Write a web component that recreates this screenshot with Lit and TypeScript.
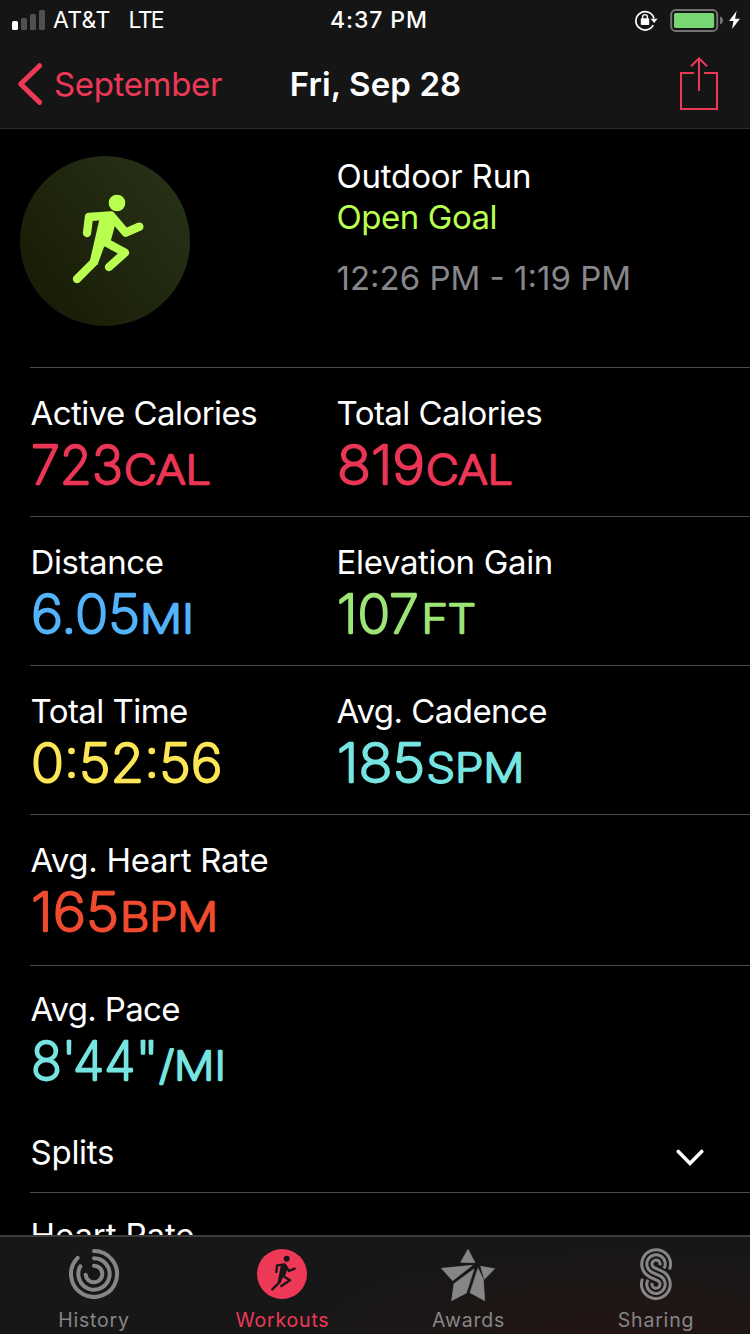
import { LitElement, html, svg, css } from "lit";
import { customElement, property } from "lit/decorators.js";
import { styleMap } from "lit/directives/style-map.js";

interface Run {
  text: string;
  x: number;
  width: number;
  adjust?: "spacing" | "spacingAndGlyphs";
}

interface Metric {
  label: string;
  tracking: number;
  color: string;
  value: Run[];
  unit?: Run;
}

const METRIC_ROWS: Metric[][] = [
  [
    { label: "Active Calories", tracking: -0.55, color: "#ea3555", value: [{ text: "723", x: 0, width: 92 }], unit: { text: "CAL", x: 93, width: 87 } },
    { label: "Total Calories", tracking: -0.55, color: "#ea3555", value: [{ text: "819", x: 0, width: 88 }], unit: { text: "CAL", x: 89, width: 87 } },
  ],
  [
    { label: "Distance", tracking: -0.4, color: "#52b3fa", value: [{ text: "6.05", x: 0, width: 109 }], unit: { text: "MI", x: 109, width: 54 } },
    { label: "Elevation Gain", tracking: -0.35, color: "#9de376", value: [{ text: "107", x: 0, width: 82 }], unit: { text: "FT", x: 84.5, width: 54.5 } },
  ],
  [
    { label: "Total Time", tracking: -0.55, color: "#fde656", value: [{ text: "0:52:56", x: 0, width: 191.5 }] },
    { label: "Avg. Cadence", tracking: -0.55, color: "#76e5e2", value: [{ text: "185", x: 0, width: 88 }], unit: { text: "SPM", x: 89.5, width: 98 } },
  ],
  [{ label: "Avg. Heart Rate", tracking: -0.3, color: "#f04b2f", value: [{ text: "165", x: 0, width: 88 }], unit: { text: "BPM", x: 89, width: 98 } }],
  [
    {
      label: "Avg. Pace",
      tracking: -0.65,
      color: "#76e5e2",
      value: [
        { text: "8'44", x: 0, width: 104.5 },
        { text: "''", x: 104.5, width: 23, adjust: "spacing" },
      ],
      unit: { text: "/MI", x: 128, width: 67 },
    },
  ],
];

@customElement("metric-cell")
export class MetricCell extends LitElement {
  @property({ attribute: false }) metric!: Metric;

  static styles = css`
    :host {
      display: block;
    }
    .label {
      height: 40px;
      line-height: 40px;
      font-size: 33px;
      color: #fff;
      white-space: nowrap;
    }
    .figure {
      display: block;
      width: 240px;
      height: 64px;
      overflow: visible;
    }
    .figure text {
      font-family: Inter, "Liberation Sans", sans-serif;
      font-weight: 200;
      stroke-width: 2.3;
      stroke-linejoin: round;
      stroke-linecap: round;
    }
    .number {
      font-size: 53px;
    }
    .unit {
      font-size: 40px;
    }
  `;

  private renderRun(run: Run, kind: string) {
    return svg`<text class=${kind} x=${run.x} y="51" textLength=${run.width} lengthAdjust=${run.adjust ?? "spacingAndGlyphs"}>${run.text}</text>`;
  }

  render() {
    const m = this.metric;
    return html`
      <div class="label" style=${styleMap({ letterSpacing: `${m.tracking}px` })}>${m.label}</div>
      <svg class="figure" viewBox="0 0 240 64" fill=${m.color} stroke=${m.color}>
        ${m.value.map((run) => this.renderRun(run, "number"))}
        ${m.unit ? this.renderRun(m.unit, "unit") : null}
      </svg>
    `;
  }
}

@customElement("status-bar")
export class StatusBar extends LitElement {
  static styles = css`
    :host {
      display: grid;
      grid-template-columns: 1fr auto 1fr;
      align-items: center;
      height: 40px;
      padding: 0 10px 0 12px;
      color: #fff;
      font-size: 23px;
    }
    .left,
    .right {
      display: flex;
      align-items: center;
    }
    .right {
      justify-content: flex-end;
    }
    .carrier {
      margin-left: 8px;
      letter-spacing: 0.3px;
    }
    .network {
      margin-left: 18px;
      letter-spacing: -1.7px;
    }
    .time {
      padding-left: 6px;
      font-weight: 500;
      letter-spacing: 0.9px;
    }
    svg {
      display: block;
    }
  `;

  render() {
    return html`
      <div class="left">
        <svg width="33" height="40" viewBox="0 0 33 40">
          <rect x="0" y="21" width="6" height="9" rx="1.6" fill="#fff" />
          <rect x="9" y="18" width="6" height="12" rx="1.6" fill="#505050" />
          <rect x="18" y="14" width="6" height="16" rx="1.6" fill="#505050" />
          <rect x="27" y="10" width="6" height="20" rx="1.6" fill="#505050" />
        </svg>
        <span class="carrier">AT&amp;T</span>
        <span class="network">LTE</span>
      </div>
      <span class="time">4:37 PM</span>
      <div class="right">
        <svg width="110" height="40" viewBox="630 0 110 40">
          <path d="M653.2 25.2A9.2 9.2 0 1 1 654 18.5" fill="none" stroke="#fff" stroke-width="1.7" />
          <path d="M650.6 18.8h7l-3.5 4.2z" fill="#fff" />
          <rect x="640.8" y="18.3" width="8.4" height="6.7" rx="0.8" fill="#fff" />
          <path d="M642.6 19v-2a2.4 2.4 0 0 1 4.8 0v2" fill="none" stroke="#fff" stroke-width="1.4" />
          <rect x="671.2" y="10" width="46" height="21" rx="4.6" fill="none" stroke="#737373" stroke-width="2" />
          <rect x="674" y="13" width="40.2" height="15" rx="1.8" fill="#77d873" />
          <path d="M720 16.6c1.8.5 3 2 3 3.9s-1.2 3.4-3 3.9z" fill="#737373" />
          <path d="M736.6 11L729 20.9h4.5L732 29l8-10.3h-4.9z" fill="#fff" />
        </svg>
      </div>
    `;
  }
}

@customElement("nav-bar")
export class NavBar extends LitElement {
  static styles = css`
    :host {
      display: grid;
      grid-template-columns: 1fr auto 1fr;
      align-items: center;
      height: 88px;
      padding: 0 30px 0 31px;
      font-size: 33px;
    }
    .back {
      display: flex;
      align-items: center;
      gap: 10px;
      margin-left: -15px;
      color: #ee3857;
      letter-spacing: -0.35px;
    }
    .title {
      color: #fff;
      font-weight: 600;
      letter-spacing: 0.1px;
    }
    .share {
      justify-self: end;
    }
    svg {
      display: block;
    }
  `;

  render() {
    return html`
      <div class="back">
        <svg width="28" height="88" viewBox="16 40 28 88">
          <path d="M39.6 65.7L20.7 84l18.9 18.4" fill="none" stroke="#ee3857" stroke-width="5" stroke-linecap="round" stroke-linejoin="round" />
        </svg>
        <span>September</span>
      </div>
      <span class="title">Fri, Sep 28</span>
      <svg class="share" width="42" height="88" viewBox="678 40 42 88" fill="none" stroke="#ee3857" stroke-width="2">
        <path d="M694 73h-13v36h36V73h-13M699 91V58.5M691 66.3l8-8 8 8" />
      </svg>
    `;
  }
}

@customElement("tab-bar")
export class TabBar extends LitElement {
  static styles = css`
    :host {
      display: grid;
      grid-template-columns: 187px 190px 182px 191px;
      height: 97px;
      border-top: 2px solid #3c3c3c;
      background: radial-gradient(ellipse 330px 90px at 620px 100%, #231514 0%, rgba(35, 21, 20, 0) 100%), #171717;
    }
    .tab {
      display: flex;
      flex-direction: column;
      align-items: center;
      padding-top: 11px;
      color: #868686;
      font-size: 19.5px;
      letter-spacing: 0.8px;
    }
    .tab:last-child {
      padding-left: 2px;
    }
    .active {
      color: #ee3857;
    }
    .caption {
      line-height: 24px;
      margin-top: 8px;
      padding-left: 1px;
    }
    svg {
      display: block;
    }
  `;

  render() {
    return html`
      <div class="tab">
        <svg width="52" height="52" viewBox="204 69 156 156" fill="none" stroke="#868686" stroke-width="12" stroke-linecap="round">
          <path d="M282 78A69 69 0 1 1 233 98.5" />
          <path d="M282 100A47 47 0 1 1 241 124" />
          <path d="M282 122A25 25 0 1 1 257 149" />
        </svg>
        <span class="caption">History</span>
      </div>
      <div class="tab active">
        <svg width="52" height="52" viewBox="768 69 156 156" fill="none">
          <circle cx="846" cy="147" r="75" fill="#ee3857" />
          <circle cx="860" cy="101.5" r="9" fill="#171717" />
          <path d="M829 141l2-20 23-3 13 20 17-7M838 172l-21 21M848 152l22 14-26 17" stroke="#171717" stroke-width="7" stroke-linecap="round" stroke-linejoin="round" />
          <path d="M843 119h15l4 12-5 18-8 8-8 18-8-4z" fill="#171717" />
        </svg>
        <span class="caption">Workouts</span>
      </div>
      <div class="tab">
        <svg width="56" height="52" viewBox="195 354 168 156" overflow="visible" fill="#868686" stroke="#868686" stroke-width="2" stroke-linejoin="round">
          <path d="M279 358l21 40-43-1zM199 415l93-9-59 46zM317 409l42 7-31 32zM237 461l60-44-23 72-44 23zM309 415l16 33 4 64-44-24z" />
        </svg>
        <span class="caption">Awards</span>
      </div>
      <div class="tab">
        <svg width="32" height="52" viewBox="0 0 32 52" overflow="visible" fill="none" stroke="#868686" stroke-width="3">
          <path d="M29.5 21.5A14.4 14.4 0 1 0 9.91 29.05L17.69 32.68A4 4 0 1 1 12.2 35" />
          <path d="M24 20.6A9.2 9.2 0 1 0 12.11 24.34L19.89 27.96A9.2 9.2 0 1 1 8 31.7" />
          <path d="M19.8 17.3A4 4 0 1 0 14.31 19.62L22.09 23.25A14.4 14.4 0 1 1 2.5 30.8" />
        </svg>
        <span class="caption">Sharing</span>
      </div>
    `;
  }
}

@customElement("app-root")
export class AppRoot extends LitElement {
  static styles = css`
    :host {
      display: flex;
      flex-direction: column;
      width: 750px;
      height: 1334px;
      overflow: hidden;
      background: #000;
      color: #fff;
      font-family: Inter, "Liberation Sans", sans-serif;
    }
    .top {
      flex: none;
      background: #151515;
      border-bottom: 1px solid #2b2b2b;
    }
    .content {
      flex: 1;
      min-height: 0;
      overflow: hidden;
    }
    .rule {
      margin-left: 30px;
      border-bottom: 1px solid #4b4b4b;
    }
    .summary {
      display: grid;
      grid-template-columns: 306.5px 1fr;
      height: 238px;
      box-sizing: border-box;
    }
    .badge {
      display: block;
      margin: 27px 0 0 -10px;
    }
    .details {
      padding-top: 27px;
      font-size: 33px;
      line-height: 41px;
      white-space: nowrap;
    }
    .activity {
      letter-spacing: -0.2px;
    }
    .goal {
      color: #b8ff4f;
      letter-spacing: -0.45px;
    }
    .period {
      margin-top: 20px;
      color: #87878b;
    }
    .row {
      display: grid;
      grid-template-columns: 306px 1fr;
      height: 148px;
      box-sizing: border-box;
      padding: 25px 0 0 0.5px;
    }
    .row.tall {
      height: 150px;
    }
    .row.pace {
      height: 147px;
      padding-top: 23px;
      margin-left: 30px;
    }
    .section {
      display: flex;
      justify-content: space-between;
      height: 79px;
      box-sizing: border-box;
      padding: 19px 46px 0 0.5px;
      font-size: 33px;
      line-height: 40px;
      letter-spacing: -0.25px;
    }
    .section.chart {
      padding-top: 22px;
      letter-spacing: -0.1px;
    }
    .chevron {
      display: block;
      margin-top: 17px;
    }
  `;

  private renderRow(metrics: Metric[], index: number) {
    const last = index === METRIC_ROWS.length - 1;
    const cells = metrics.map((m) => html`<metric-cell .metric=${m}></metric-cell>`);
    if (last) return html`<div class="row pace">${cells}</div>`;
    return html`<div class="rule"><div class="row ${index === 3 ? "tall" : ""}">${cells}</div></div>`;
  }

  render() {
    return html`
      <div class="top">
        <status-bar></status-bar>
        <nav-bar></nav-bar>
      </div>
      <div class="content">
        <div class="rule">
          <div class="summary">
            <svg class="badge" width="170" height="170" viewBox="30 33 510 510">
              <defs>
                <linearGradient id="disc" x1="0.1" y1="0.8" x2="0.9" y2="0.2">
                  <stop offset="0" stop-color="#191c06" />
                  <stop offset="1" stop-color="#263017" />
                </linearGradient>
              </defs>
              <circle cx="285" cy="288" r="255" fill="url(#disc)" />
              <g fill="#b8ff4f">
                <circle cx="321" cy="174" r="25" />
                <path d="M270 215L239 350l23 11 20-55 21-21 13-47-14-36z" />
              </g>
              <path d="M231 264l6-48 66-5 44 52 41-18M250 353l-49 49M288 292l57 31-48 43" fill="none" stroke="#b8ff4f" stroke-width="25" stroke-linecap="round" stroke-linejoin="round" />
            </svg>
            <div class="details">
              <div class="activity">Outdoor Run</div>
              <div class="goal">Open Goal</div>
              <div class="period">12:26 PM - 1:19 PM</div>
            </div>
          </div>
        </div>
        ${METRIC_ROWS.map((r, i) => this.renderRow(r, i))}
        <div class="rule">
          <div class="section">
            <span>Splits</span>
            <svg class="chevron" width="28" height="18" viewBox="0 0 28 18">
              <path d="M2.3 2.5L14 14.4 25.7 2.5" fill="none" stroke="#fff" stroke-width="3.6" stroke-linecap="round" />
            </svg>
          </div>
        </div>
        <div class="rule"><div class="section chart">Heart Rate</div></div>
      </div>
      <tab-bar></tab-bar>
    `;
  }
}
